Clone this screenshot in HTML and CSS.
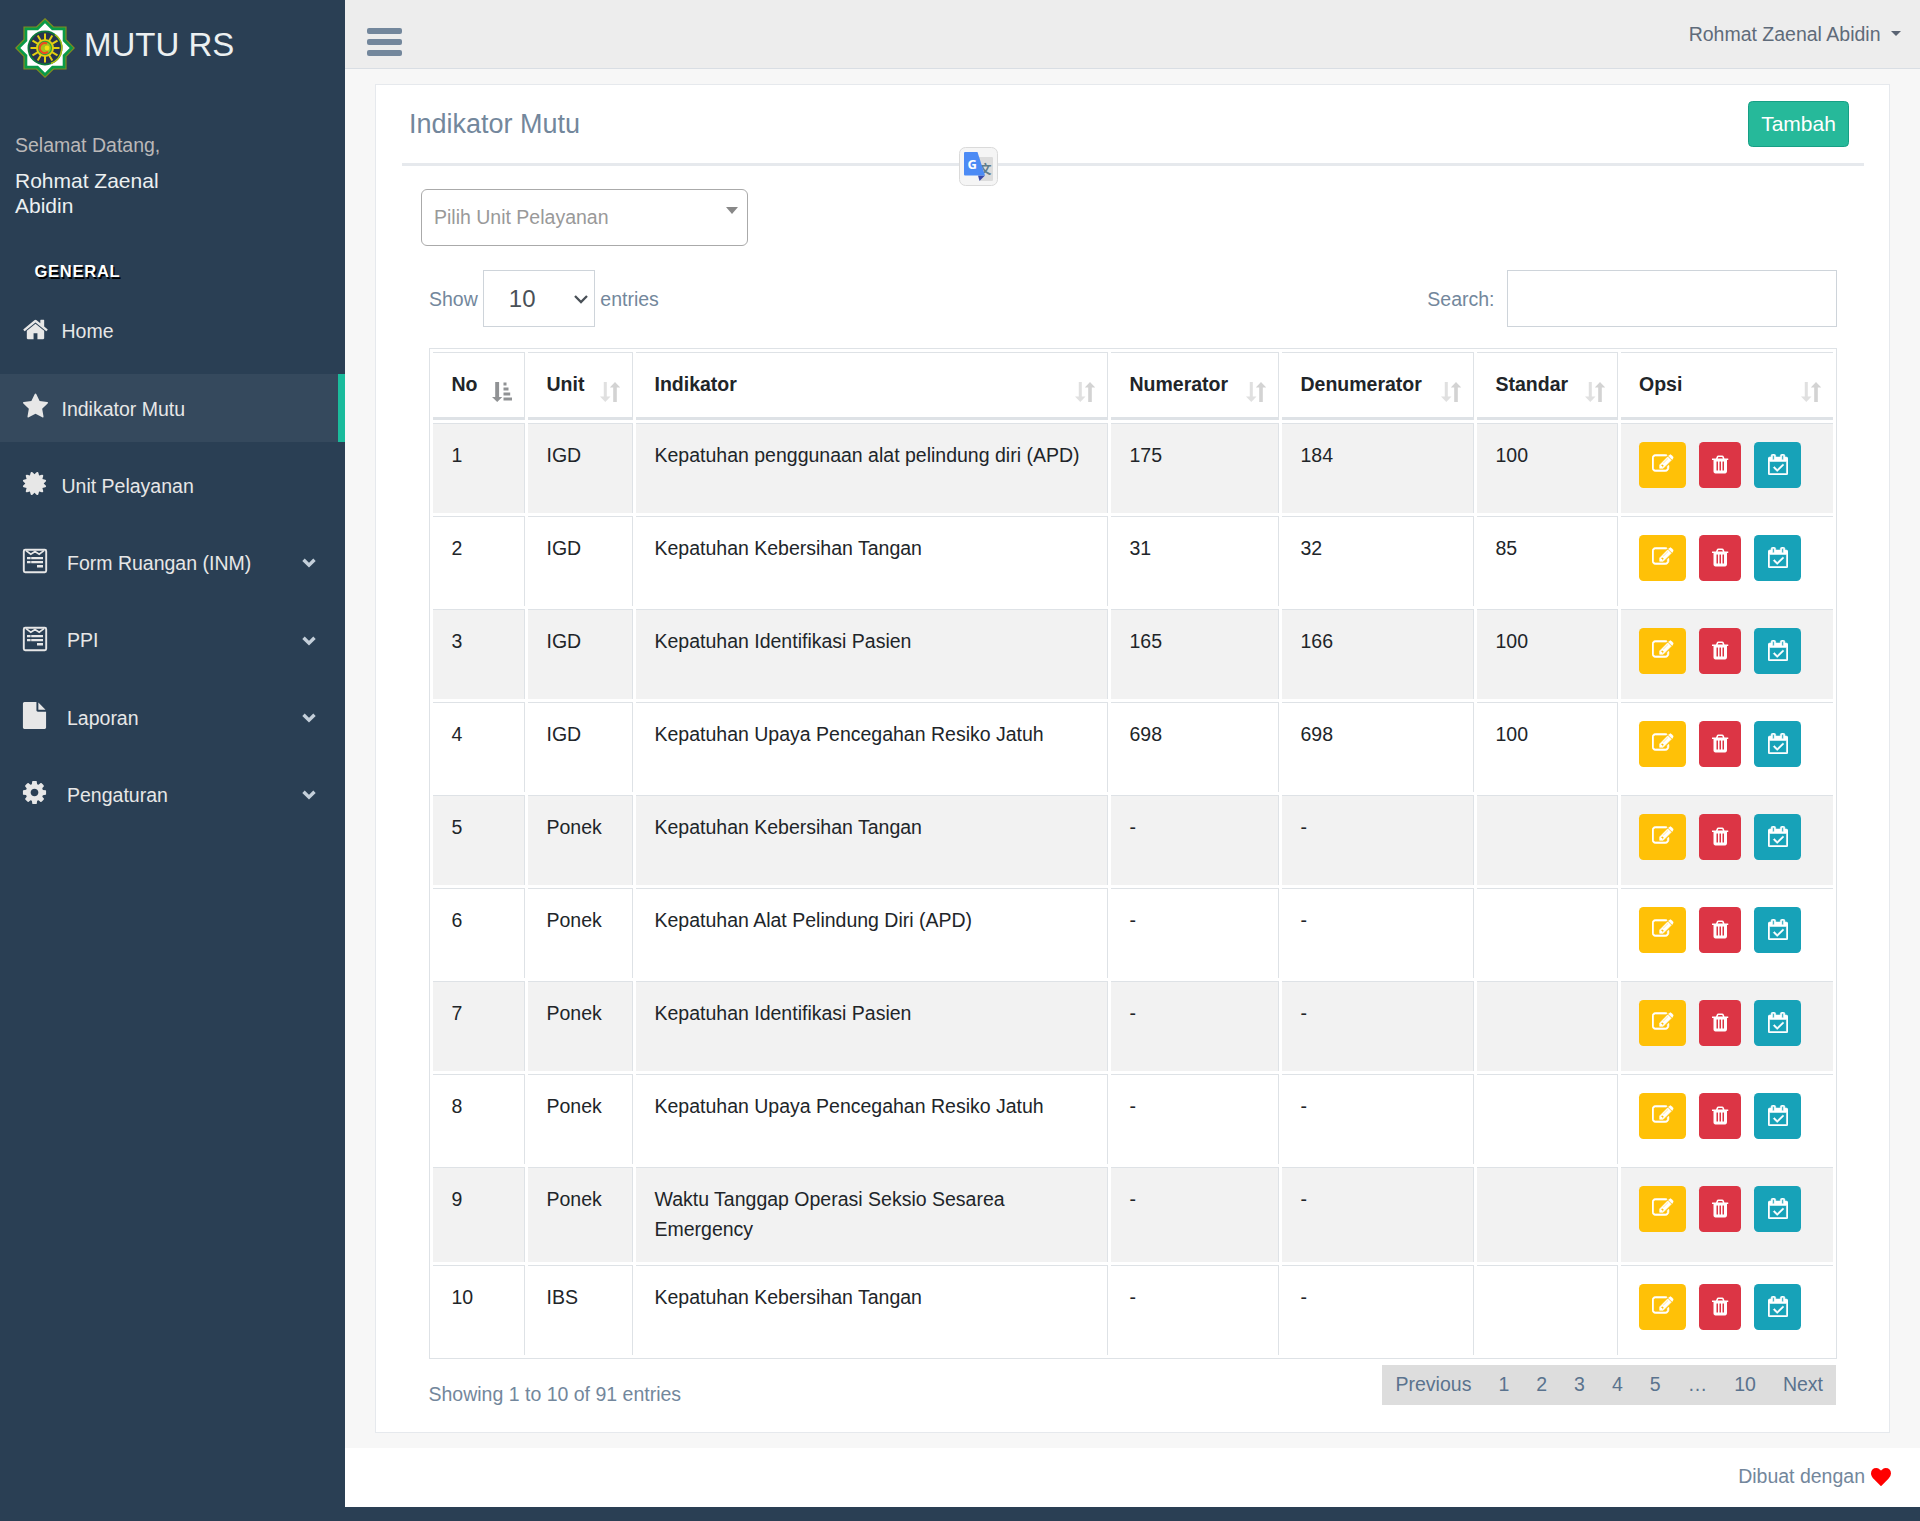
FILE: index.html
```html
<!DOCTYPE html>
<html lang="id">
<head>
<meta charset="utf-8">
<title>Mutu RS - Indikator Mutu</title>
<link rel="stylesheet" href="styles.css">
</head>
<body>
<svg class="sprite" width="0" height="0" aria-hidden="true">
  <symbol id="home" viewBox="0 0 1792 1792"><path d="M1472 992v480q0 26-19 45t-45 19h-384v-384h-256v384h-384q-26 0-45-19t-19-45v-480q0-1 .5-3t.5-3l575-474 575 474q1 2 1 6zm223-69l-62 74q-8 9-21 11h-3q-13 0-21-7l-692-577-692 577q-12 8-24 7-13-2-21-11l-62-74q-8-10-7-23.5t11-21.5l719-599q32-26 76-26t76 26l244 204v-195q0-14 9-23t23-9h192q14 0 23 9t9 23v408l219 182q10 8 11 21.5t-7 23.5z"/></symbol>
  <symbol id="star" viewBox="0 0 1792 1792"><path d="M1728 647q0 22-26 48l-363 354 86 500q1 7 1 20 0 21-10.5 35.5t-30.5 14.5q-19 0-40-12l-449-236-449 236q-22 12-40 12-21 0-31.5-14.5t-10.5-35.5q0-6 2-20l86-500-364-354q-25-27-25-48 0-37 56-46l502-73 225-455q19-41 49-41t49 41l225 455 502 73q56 9 56 46z"/></symbol>
  <symbol id="certificate" viewBox="0 0 1792 1792"><path d="M1504 896l138 135q30 28 20 70-12 41-52 51l-188 48 53 186q12 41-19 70-29 31-70 19l-186-53-48 188q-10 40-51 52-12 2-19 2-31 0-51-22l-135-138-135 138q-28 30-70 20-41-11-51-52l-48-188-186 53q-41 12-70-19-31-29-19-70l53-186-188-48q-40-10-52-51-10-42 20-70l138-135-138-135q-30-28-20-70 12-41 52-51l188-48-53-186q-12-41 19-70 29-31 70-19l186 53 48-188q10-41 51-51 41-12 70 19l135 139 135-139q29-30 70-19 41 10 51 51l48 188 186-53q41-12 70 19 31 29 19 70l-53 186 188 48q40 10 52 51 10 42-20 70z"/></symbol>
  <symbol id="form" viewBox="0 0 27 27"><rect x="2.800" y="2.800" width="22.400" height="22.400" rx="1.400" fill="none" stroke="currentColor" stroke-width="1.900"/><path d="M5 3.600l4.800 3.600 4.200-2.600 4.200 2.600 4.800-3.600" fill="none" stroke="currentColor" stroke-width="1.700"/><path d="M6 10h3.600v2.300H6zM10.200 10H22v2.300H10.200zM6 14h3.600v2.300H6zM10.200 14H22v2.300H10.200zM16 18h6v2.600h-6z"/></symbol>
  <symbol id="file" viewBox="0 0 1792 1792"><path d="M1152 512v-472q22 14 36 28l408 408q14 14 28 36h-472zm-128 32q0 40 28 68t68 28h544v1056q0 40-28 68t-68 28h-1344q-40 0-68-28t-28-68v-1600q0-40 28-68t68-28h800v544z"/></symbol>
  <symbol id="cog" viewBox="0 0 1792 1792"><path d="M1152 896q0-106-75-181t-181-75-181 75-75 181 75 181 181 75 181-75 75-181zm512-109v222q0 12-8 23t-20 13l-185 28q-19 54-39 91 35 50 107 138 10 12 10 25t-9 23q-27 37-99 108t-94 71q-12 0-26-9l-138-108q-44 23-91 38-16 136-29 186-7 28-36 28h-222q-14 0-24.500-8.500t-11.500-21.500l-28-184q-49-16-90-37l-141 107q-10 9-25 9-14 0-25-11-126-114-165-168-7-10-7-23 0-12 8-23 15-21 51-66.500t54-70.500q-27-50-41-99l-183-27q-13-2-21-12.500t-8-23.500v-222q0-12 8-23t19-13l186-28q14-46 39-92-40-57-107-138-10-12-10-24 0-10 9-23 26-36 98.500-107.500t94.500-71.500q13 0 26 10l138 107q44-23 91-38 16-136 29-186 7-28 36-28h222q14 0 24.500 8.500t11.500 21.500l28 184q49 16 90 37l142-107q9-9 24-9 13 0 25 10 129 119 165 170 7 8 7 22 0 12-8 23-15 21-51 66.500t-54 70.500q26 50 41 98l183 28q13 2 21 12.500t8 23.500z"/></symbol>
  <symbol id="chevron" viewBox="0 0 14 10"><path d="M1.500 1.700L7 7.200l5.500-5.500" fill="none" stroke="currentColor" stroke-width="3.400"/></symbol>
  <symbol id="edit" viewBox="0 0 1792 1792"><path d="M888 1184l116-116-152-152-116 116v56h96v96h56zm440-720q-16-16-33 1l-350 350q-17 17-1 33t33-1l350-350q17-17 1-33zm80 594v190q0 119-84.500 203.500t-203.500 84.500h-832q-119 0-203.500-84.500t-84.500-203.500v-832q0-119 84.500-203.500t203.500-84.500h832q63 0 117 25 15 7 18 23 3 17-9 29l-49 49q-14 14-32 8-23-6-45-6h-832q-66 0-113 47t-47 113v832q0 66 47 113t113 47h832q66 0 113-47t47-113v-126q0-13 9-22l64-64q15-15 35-7t20 29zm-96-738l288 288-672 672h-288v-288zm444 132l-92 92-288-288 92-92q28-28 68-28t68 28l152 152q28 28 28 68t-28 68z"/></symbol>
  <symbol id="trash" viewBox="192 0 1408 1792"><path d="M704 1376v-704q0-14-9-23t-23-9h-64q-14 0-23 9t-9 23v704q0 14 9 23t23 9h64q14 0 23-9t9-23zm256 0v-704q0-14-9-23t-23-9h-64q-14 0-23 9t-9 23v704q0 14 9 23t23 9h64q14 0 23-9t9-23zm256 0v-704q0-14-9-23t-23-9h-64q-14 0-23 9t-9 23v704q0 14 9 23t23 9h64q14 0 23-9t9-23zm-544-992h448l-48-117q-7-9-17-11h-317q-10 2-17 11zm928 32v64q0 14-9 23t-23 9h-96v948q0 83-47 143.500t-113 60.500h-832q-66 0-113-58.500t-47-141.500v-952h-96q-14 0-23-9t-9-23v-64q0-14 9-23t23-9h309l70-167q15-37 54-63t79-26h320q40 0 79 26t54 63l70 167h309q14 0 23 9t9 23z"/></symbol>
  <symbol id="calendar" viewBox="0 0 1664 1792" preserveAspectRatio="none"><path d="M1303 964l-512 512q-10 9-23 9t-23-9l-288-288q-9-10-9-23t9-22l46-46q9-9 22-9t23 9l220 220 444-444q10-9 23-9t22 9l46 46q9 9 9 22t-9 23zm-1175 700h1408v-1024h-1408v1024zm384-1216v-288q0-14-9-23t-23-9h-64q-14 0-23 9t-9 23v288q0 14 9 23t23 9h64q14 0 23-9t9-23zm768 0v-288q0-14-9-23t-23-9h-64q-14 0-23 9t-9 23v288q0 14 9 23t23 9h64q14 0 23-9t9-23zm384-64v1280q0 52-38 90t-90 38h-1408q-52 0-90-38t-38-90v-1280q0-52 38-90t90-38h128v-96q0-66 47-113t113-47h64q66 0 113 47t47 113v96h384v-96q0-66 47-113t113-47h64q66 0 113 47t47 113v96h128q52 0 90 38t38 90z"/></symbol>
  <symbol id="heart" viewBox="0 128 1792 1536" preserveAspectRatio="none"><path d="M896 1664q-26 0-44-18l-624-602q-10-8-27.500-26t-55.500-65.500-68-97.500-53.500-121-23.500-138q0-220 127-344t351-124q62 0 126.500 21.500t120 58 95.500 68.500 76 68q36-36 76-68t95.500-68.500 120-58 126.500-21.500q224 0 351 124t127 344q0 221-229 450l-623 600q-18 18-44 18z"/></symbol>
  <symbol id="sort" viewBox="0 0 20 20"><path d="M3.800 0h3v14.500h3.700L5.300 20 0 14.500h3.800z" opacity=".7"/><path d="M13.200 20V5.500H9.800L15 0l5.200 5.500h-3.400V20z"/></symbol>
  <symbol id="sort-asc" viewBox="0 0 20 20"><path d="M3.200 0h3.900v15h3.200L5.200 20 0 15h3.200zM11.500.5h3v3h-3zM11.500 5.500h5v3h-5zM11.500 10.500h6.700v3h-6.700zM11.500 15.500h8.500v3h-8.500z"/></symbol>
  <symbol id="logo" viewBox="0 0 60 60">
    <path d="M30 .8L38.400 9H51v12.600L59.200 30 51 38.400V51H38.400L30 59.200 21.600 51H9V38.400L.8 30 9 21.600V9h12.600z" fill="#0a9a48" stroke="#7f8c1f" stroke-width="1.200"/>
    <path d="M30 5.300L37 12.300h10.700V23l7 7-7 7v10.700H37l-7 7-7-7H12.300V37l-7-7 7-7V12.300H23z" fill="#fff"/>
    <circle cx="30" cy="30" r="16.600" fill="#27334f" stroke="#0b7a3c" stroke-width="1.800"/>
    <path d="M40 16.500A16.600 16.600 0 0 1 36 45.500" fill="none" stroke="#b4bd16" stroke-width="1.500"/>
    <g stroke="#e3cf10" stroke-width="2"><path d="M30 15.500v29M15.500 30h29M22.700 17.500l14.600 25M37.300 17.500l-14.600 25M17.500 22.700l25 14.600M17.500 37.300l25-14.600"/></g>
    <circle cx="30" cy="30" r="9" fill="#e3cf10"/><circle cx="30" cy="30" r="6.500" fill="#a3c31c" stroke="#31a13a" stroke-width="1.300"/>
    <path d="M32 25.500a5 5 0 1 0 1 8.300" fill="none" stroke="#ee4a20" stroke-width="2.100"/><circle cx="32" cy="30" r="2.400" fill="#f0e010"/>
  </symbol>
</svg>

<div class="layout">
  <aside class="sidebar">
    <div class="brand"><svg class="brand-logo"><use href="#logo"/></svg><span class="brand-name">MUTU RS</span></div>
    <div class="profile">
      <span class="greeting">Selamat Datang,</span>
      <div class="profile-name">Rohmat Zaenal Abidin</div>
    </div>
    <h3 class="menu-heading">GENERAL</h3>
    <nav class="menu">
      <a class="item wide-icon"><svg class="item-icon"><use href="#home"/></svg><span>Home</span></a>
      <a class="item wide-icon active"><svg class="item-icon"><use href="#star"/></svg><span>Indikator Mutu</span></a>
      <a class="item"><svg class="item-icon"><use href="#certificate"/></svg><span>Unit Pelayanan</span></a>
      <a class="item parent"><svg class="item-icon"><use href="#form"/></svg><span>Form Ruangan (INM)</span><svg class="chevron"><use href="#chevron"/></svg></a>
      <a class="item parent"><svg class="item-icon"><use href="#form"/></svg><span>PPI</span><svg class="chevron"><use href="#chevron"/></svg></a>
      <a class="item parent"><svg class="item-icon"><use href="#file"/></svg><span>Laporan</span><svg class="chevron"><use href="#chevron"/></svg></a>
      <a class="item parent"><svg class="item-icon"><use href="#cog"/></svg><span>Pengaturan</span><svg class="chevron"><use href="#chevron"/></svg></a>
    </nav>
  </aside>

  <div class="main">
    <header class="topbar">
      <div class="toggle"><i></i><i></i><i></i></div>
      <div class="user">Rohmat Zaenal Abidin<span class="user-caret"></span></div>
    </header>

    <main class="content">
      <section class="panel">
        <div class="panel-title">
          <h2>Indikator Mutu</h2>
          <button class="add">Tambah</button>
          <svg class="translate" viewBox="0 0 39 39">
            <rect x=".5" y=".5" width="38" height="38" rx="6" fill="#f5f5f5" stroke="#dadada"/>
            <path d="M18 10h15q1 0 1 1v22q0 1-1 1H21z" fill="#dcdcdc"/>
            <text x="20" y="27" font-family="Noto Sans CJK SC" font-weight="700" font-size="12.500" fill="#607d8b">文</text>
            <path d="M19 28.500h7l-5.500 5.500z" fill="#3949ab"/>
            <path d="M6 5h12.500L26 28.500H6q-1 0-1-1V6q0-1 1-1z" fill="#4c8bf5"/>
            <text x="8.400" y="21.500" font-family="Open Sans" font-weight="700" font-size="13" fill="#fff">G</text>
          </svg>
        </div>
        <div class="unit-select"><span>Pilih Unit Pelayanan</span><i class="select-caret"></i></div>
        <div class="controls">
          <label class="length"><span>Show</span><span class="length-select">10<svg viewBox="0 0 14 8"><path d="M1 1l6 6 6-6" fill="none" stroke="#495057" stroke-width="2.300"/></svg></span><span>entries</span></label>
          <label class="search"><span>Search:</span><input type="text" class="search-input"></label>
        </div>

        <table class="data">
          <colgroup><col class="c-no"><col class="c-unit"><col class="c-ind"><col class="c-num"><col class="c-den"><col class="c-std"><col class="c-ops"></colgroup>
          <thead><tr>
            <th><div class="head">No<svg class="asc"><use href="#sort-asc"/></svg></div></th>
            <th><div class="head">Unit<svg><use href="#sort"/></svg></div></th>
            <th><div class="head">Indikator<svg><use href="#sort"/></svg></div></th>
            <th><div class="head">Numerator<svg><use href="#sort"/></svg></div></th>
            <th><div class="head">Denumerator<svg><use href="#sort"/></svg></div></th>
            <th><div class="head">Standar<svg><use href="#sort"/></svg></div></th>
            <th><div class="head">Opsi<svg><use href="#sort"/></svg></div></th>
          </tr></thead>
          <tbody>
            <tr><td>1</td><td>IGD</td><td>Kepatuhan penggunaan alat pelindung diri (APD)</td><td>175</td><td>184</td><td>100</td><td><div class="ops"><button class="btn edit"><svg><use href="#edit"/></svg></button><button class="btn del"><svg><use href="#trash"/></svg></button><button class="btn cal"><svg><use href="#calendar"/></svg></button></div></td></tr>
            <tr><td>2</td><td>IGD</td><td>Kepatuhan Kebersihan Tangan</td><td>31</td><td>32</td><td>85</td><td><div class="ops"><button class="btn edit"><svg><use href="#edit"/></svg></button><button class="btn del"><svg><use href="#trash"/></svg></button><button class="btn cal"><svg><use href="#calendar"/></svg></button></div></td></tr>
            <tr><td>3</td><td>IGD</td><td>Kepatuhan Identifikasi Pasien</td><td>165</td><td>166</td><td>100</td><td><div class="ops"><button class="btn edit"><svg><use href="#edit"/></svg></button><button class="btn del"><svg><use href="#trash"/></svg></button><button class="btn cal"><svg><use href="#calendar"/></svg></button></div></td></tr>
            <tr><td>4</td><td>IGD</td><td>Kepatuhan Upaya Pencegahan Resiko Jatuh</td><td>698</td><td>698</td><td>100</td><td><div class="ops"><button class="btn edit"><svg><use href="#edit"/></svg></button><button class="btn del"><svg><use href="#trash"/></svg></button><button class="btn cal"><svg><use href="#calendar"/></svg></button></div></td></tr>
            <tr><td>5</td><td>Ponek</td><td>Kepatuhan Kebersihan Tangan</td><td>-</td><td>-</td><td></td><td><div class="ops"><button class="btn edit"><svg><use href="#edit"/></svg></button><button class="btn del"><svg><use href="#trash"/></svg></button><button class="btn cal"><svg><use href="#calendar"/></svg></button></div></td></tr>
            <tr><td>6</td><td>Ponek</td><td>Kepatuhan Alat Pelindung Diri (APD)</td><td>-</td><td>-</td><td></td><td><div class="ops"><button class="btn edit"><svg><use href="#edit"/></svg></button><button class="btn del"><svg><use href="#trash"/></svg></button><button class="btn cal"><svg><use href="#calendar"/></svg></button></div></td></tr>
            <tr><td>7</td><td>Ponek</td><td>Kepatuhan Identifikasi Pasien</td><td>-</td><td>-</td><td></td><td><div class="ops"><button class="btn edit"><svg><use href="#edit"/></svg></button><button class="btn del"><svg><use href="#trash"/></svg></button><button class="btn cal"><svg><use href="#calendar"/></svg></button></div></td></tr>
            <tr><td>8</td><td>Ponek</td><td>Kepatuhan Upaya Pencegahan Resiko Jatuh</td><td>-</td><td>-</td><td></td><td><div class="ops"><button class="btn edit"><svg><use href="#edit"/></svg></button><button class="btn del"><svg><use href="#trash"/></svg></button><button class="btn cal"><svg><use href="#calendar"/></svg></button></div></td></tr>
            <tr><td>9</td><td>Ponek</td><td>Waktu Tanggap Operasi Seksio Sesarea Emergency</td><td>-</td><td>-</td><td></td><td><div class="ops"><button class="btn edit"><svg><use href="#edit"/></svg></button><button class="btn del"><svg><use href="#trash"/></svg></button><button class="btn cal"><svg><use href="#calendar"/></svg></button></div></td></tr>
            <tr><td>10</td><td>IBS</td><td>Kepatuhan Kebersihan Tangan</td><td>-</td><td>-</td><td></td><td><div class="ops"><button class="btn edit"><svg><use href="#edit"/></svg></button><button class="btn del"><svg><use href="#trash"/></svg></button><button class="btn cal"><svg><use href="#calendar"/></svg></button></div></td></tr>
          </tbody>
        </table>

        <div class="table-foot">
          <div class="info">Showing 1 to 10 of 91 entries</div>
          <div class="pages"><a>Previous</a><a>1</a><a>2</a><a>3</a><a>4</a><a>5</a><a>…</a><a>10</a><a>Next</a></div>
        </div>
      </section>
    </main>

    <footer class="footer">Dibuat dengan<svg class="heart"><use href="#heart"/></svg></footer>
  </div>
</div>
</body>
</html>
```
FILE: styles.css
```css
* { box-sizing: border-box; }

body {
  margin: 0;
  background: #2a3f54;
  color: #73879c;
  font-family: "Liberation Sans", Arial, sans-serif;
  font-size: 19.5px;
  line-height: 29.25px;
}

svg { display: block; fill: currentColor; flex: none; overflow: visible; }
.sprite { position: absolute; }
h2, h3 { margin: 0; font-weight: 400; }
button { font-family: inherit; padding: 0; border: 0; }

.layout { display: flex; height: 1521px; }

/* Sidebar */
.sidebar { width: 345px; flex: none; color: #e7e7e7; }
.brand { display: flex; align-items: center; height: 96px; padding-left: 15px; }
.brand-logo { width: 60px; height: 60px; }
.brand-name { margin: 0 0 6px 9px; font-size: 33px; color: #ecf0f1; }
.profile { padding: 34.5px 0 0 15px; }
.greeting { display: block; height: 29px; color: #bab8b8; }
.profile-name { width: 170px; margin-top: 8px; font-size: 21px; line-height: 25px; color: #ecf0f1; }
.menu-heading {
  margin: 41px 0 13.25px 34.5px;
  font-size: 16.5px;
  line-height: 25px;
  font-weight: 700;
  letter-spacing: .75px;
  color: #fff;
  text-shadow: 1.5px 1.5px #000;
}
.menu { display: flex; flex-direction: column; gap: 9px; }
.item { display: flex; height: 68.25px; padding: 18.75px 29px 0 20.5px; }
.item span { padding-top: 1.9px; }
.item-icon { width: 27px; height: 27px; margin-right: 14px; }
.wide-icon .item-icon { margin: 0 13px 0 1px; }
.parent .item-icon { margin-right: 19.5px; }
.active { background: #35495d; border-right: 7px solid #1abb9c; }
.chevron { width: 14px; height: 10px; margin: 11px 0 0 auto; color: #c4cfda; }

/* Main column */
.main { flex: 1; display: flex; flex-direction: column; height: 1507px; }
.topbar {
  display: flex;
  justify-content: space-between;
  height: 69px;
  padding: 0 19px 0 22px;
  background: #ededed;
  border-bottom: 1px solid #d9dee4;
}
.toggle { display: flex; flex-direction: column; gap: 5px; width: 34.5px; padding-top: 28px; }
.toggle i { height: 6px; border-radius: 2px; background: #73879c; }
.user { display: flex; padding-top: 19.5px; color: #5f6b7a; }
.user-caret, .select-caret { width: 0; height: 0; border: 5px solid transparent; border-bottom: 0; border-top-color: #5a6473; }
.user-caret { margin: 11.5px 0 0 10.5px; }

.content { flex: 1; padding: 15px 30px; background: #f7f7f7; }
.panel { height: 1349px; padding: 0 25px 0 26px; background: #fff; border: 1px solid #e6e9ed; }
.panel-title {
  position: relative;
  display: flex;
  justify-content: space-between;
  height: 81px;
  padding: 16px 15px 0 7px;
  border-bottom: 3px solid #e6e9ed;
}
.panel-title h2 { font-size: 27px; line-height: 47px; }
.add {
  width: 101px;
  height: 46px;
  background: #26b99a;
  border: 1px solid #169f85;
  border-radius: 4.5px;
  color: #fff;
  font-size: 21px;
}
.translate { position: absolute; left: 557px; top: 62px; width: 39px; height: 39px; }

.unit-select {
  display: flex;
  justify-content: space-between;
  width: 327px;
  height: 57px;
  margin: 23px 0 0 19px;
  padding: 13.4px 9px 0 12px;
  border: 1px solid #aaa;
  border-radius: 6px;
  color: #999;
}
.select-caret { border-width: 7.5px 6px 0; border-top-color: #888; margin-top: 3.6px; }

.controls { display: flex; justify-content: space-between; margin: 24px 27px 21px; height: 57px; }
.length, .search { display: flex; align-items: center; }
.length > span:not(.length-select), .search > span { padding-top: 2px; }
.length-select {
  display: flex;
  align-items: center;
  justify-content: space-between;
  width: 112px;
  height: 57px;
  margin: 0 5.5px 0 5px;
  padding: 0 6px 0 25px;
  border: 1px solid #ced4da;
  color: #495057;
  font-size: 24px;
}
.length-select svg { width: 14px; height: 8px; }
.search { gap: 12.5px; }
.search-input { width: 330px; height: 57px; border: 1px solid #ced4da; background: #fff; }

/* Table */
.data {
  width: 1408px;
  margin-left: 27px;
  table-layout: fixed;
  border: 1px solid #dee2e6;
  border-collapse: separate;
  border-spacing: 3px;
  color: #212529;
}
.c-no { width: 92px; }
.c-unit { width: 105px; }
.c-ind { width: 472px; }
.c-num { width: 168px; }
.c-den { width: 192px; }
.c-std { width: 141px; }
.c-ops { width: 212px; }
.data th, .data td {
  padding: 17.3px 12px 0 18.5px;
  border: 1px solid #dee2e6;
  border-width: 1px 1px 0 0;
  text-align: left;
  vertical-align: top;
}
.data th { height: 68px; border-bottom-width: 3px; }
.data td { height: 90px; padding-bottom: 17px; }
.data tbody tr:nth-child(9) td { height: 95px; }
.data th:last-child, .data td:last-child { border-right: 0; padding-left: 18px; }
.data tbody tr:nth-child(odd) td { background: #f2f2f2; }
.head { display: flex; justify-content: space-between; height: 29px; }
.head svg { width: 20px; height: 20px; margin-top: 11.7px; color: #d3d3d3; }
.head .asc { color: #909294; }

.ops { display: flex; height: 46px; margin-top: .7px; }
.btn { display: flex; align-items: center; justify-content: center; height: 46px; border-radius: 4.5px; color: #fff; }
.edit { width: 47px; margin-right: 13px; background: #ffc107; }
.edit svg { width: 21.5px; height: 21.5px; margin-bottom: 3px; stroke: #fff; stroke-width: 50px; }
.del { width: 42px; margin-right: 13px; background: #dc3545; }
.del svg { width: 16.5px; height: 21px; margin-bottom: 1px; }
.cal { width: 47px; background: #17a2b8; }
.cal svg { width: 20px; height: 21px; margin-bottom: 1px; stroke: #fff; stroke-width: 45px; }

.table-foot { display: flex; justify-content: space-between; margin: 6px 28px 0 26.5px; }
.info { padding-top: 14.5px; }
.pages { display: flex; height: 40px; background: #ddd; color: #5a738e; }
.pages a { padding: 5px 13px 0 14px; }

.footer { display: flex; justify-content: flex-end; height: 59px; padding: 14px 29.5px 0 0; background: #fff; }
.heart { width: 20px; height: 18px; margin: 5.5px 0 0 5.5px; color: #f00; }
```
